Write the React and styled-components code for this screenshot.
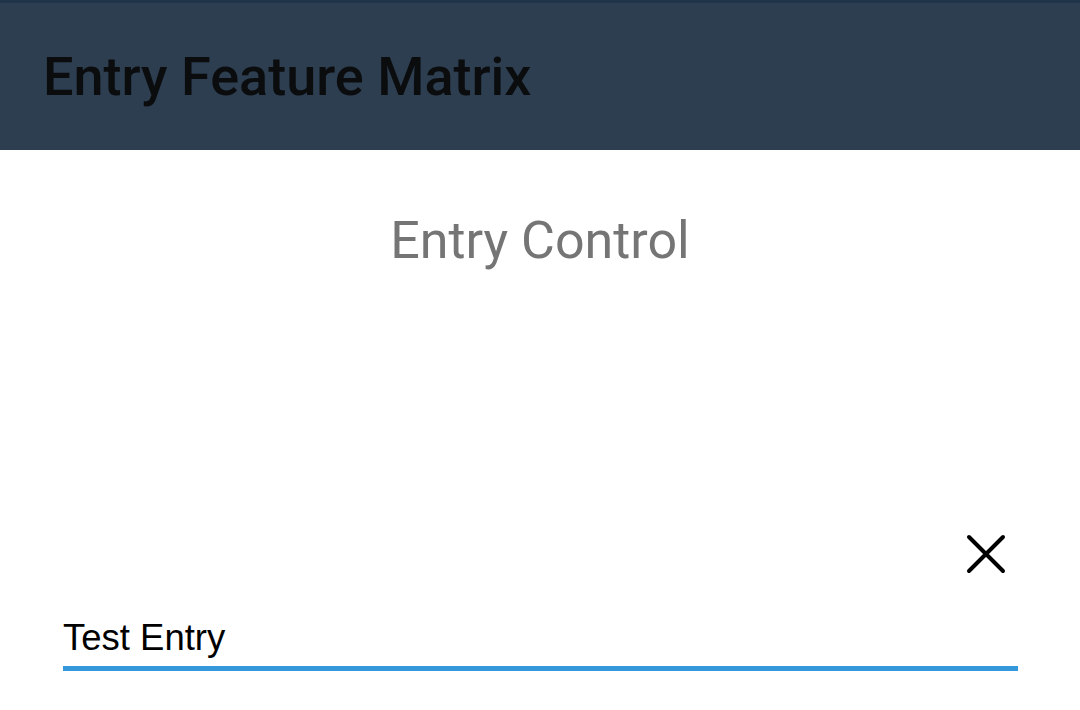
import React from 'react';
import styled, { createGlobalStyle } from 'styled-components';

const GlobalStyle = createGlobalStyle`
  body {
    margin: 0;
    background: #fff;
    font-family: Roboto, "Noto Sans", sans-serif;
  }
`;

const Screen = styled.div`
  width: 1080px;
  height: 710px;
  overflow: hidden;
  display: flex;
  flex-direction: column;
`;

const NavBar = styled.header`
  height: 150px;
  flex-shrink: 0;
  border-top: 3px solid #1f3349;
  background: #2d3e50;
  display: flex;
  align-items: center;
  padding: 0 0 0 43px;
  box-sizing: border-box;
  h1 {
    margin: 0;
    font-family: Roboto, sans-serif;
    font-weight: 500;
    font-size: 54px;
    color: #0b0c0e;
  }
`;

const Heading = styled.h2`
  margin: 60px 0 0;
  text-align: center;
  font-family: Roboto, sans-serif;
  font-weight: 400;
  font-size: 52px;
  color: #757575;
`;

const ClearRow = styled.div`
  display: flex;
  justify-content: flex-end;
  padding-right: 72px;
  margin-top: 261px;
`;

const ClearButton = styled.button`
  width: 44px;
  height: 44px;
  padding: 0;
  border: none;
  background: none;
  display: flex;
  align-items: center;
  justify-content: center;
`;

const EntryField = styled.div`
  margin: 41px 62px 0 63px;
  padding-bottom: 7px;
  border-bottom: 5px solid #3498db;
  font-family: "Liberation Sans", Arial, sans-serif;
  font-size: 36.5px;
  color: #000;
`;

const CloseIcon = () => (
  <svg width='40' height='40' viewBox='0 0 40 40'>
    <path d='M3 3 L37 37 M37 3 L3 37' stroke='#000' strokeWidth='4' strokeLinecap='round' />
  </svg>
);

export default function App() {
  return (
    <>
      <GlobalStyle />
      <Screen>
        <NavBar>
          <h1>Entry Feature Matrix</h1>
        </NavBar>
        <Heading>Entry Control</Heading>
        <ClearRow>
          <ClearButton aria-label='Clear'>
            <CloseIcon />
          </ClearButton>
        </ClearRow>
        <EntryField>Test Entry</EntryField>
      </Screen>
    </>
  );
}
